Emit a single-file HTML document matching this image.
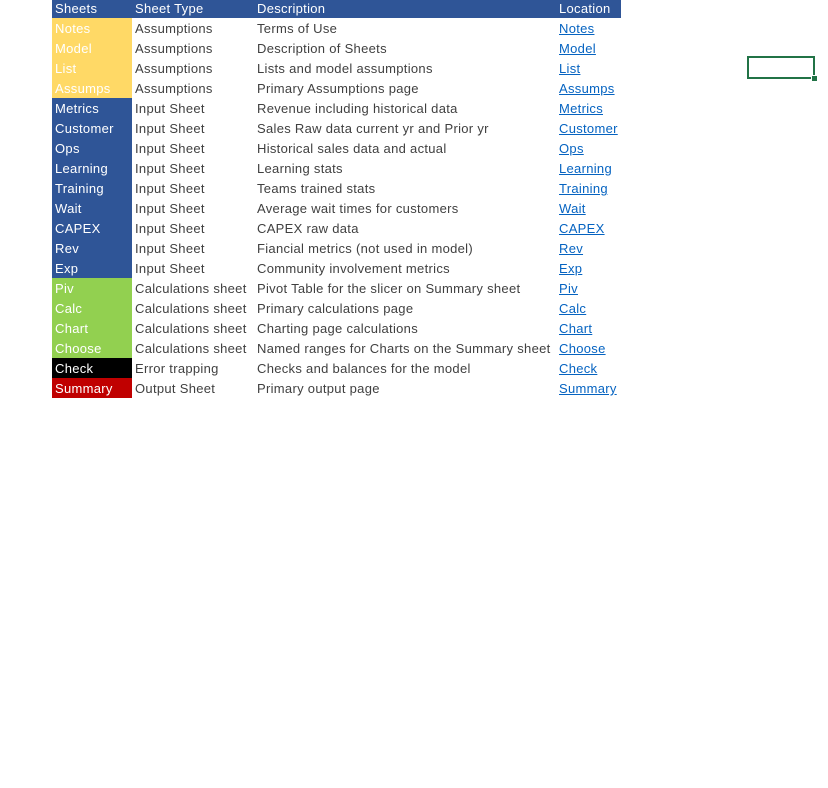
<!DOCTYPE html>
<html><head><meta charset="utf-8"><style>
body{margin:0;width:828px;height:788px;background:#fff;position:relative;font-family:"Liberation Sans",sans-serif;font-size:13px;letter-spacing:0.3px;overflow:hidden}
.r{position:absolute;left:52px;height:20px;width:569px}
.r div{position:absolute;top:0;height:20px;line-height:21px;padding-left:3px;box-sizing:border-box;white-space:nowrap;color:#404040}
.a{left:0;width:80px;color:#fff!important}
.b{left:80px;width:122px}
.c{left:202px;width:302px}
.d{left:504px;width:65px}
.d span{color:#0563c1;text-decoration:underline}
.h{top:0;height:18px;background:#2f5597}
.h div{height:18px;line-height:18px;color:#fff}
.y{background:#ffd966}.u{background:#2f5597}.g{background:#92d050}.k{background:#000}.re{background:#c00000}
.sel{position:absolute;left:747px;top:56px;width:64px;height:19px;border:2px solid #217346}
.sq{position:absolute;left:811px;top:75px;width:5px;height:5px;background:#217346;border:1px solid #fff}
</style></head><body>
<div class="r h"><div class="a">Sheets</div><div class="b" style="color:#fff">Sheet Type</div><div class="c" style="color:#fff">Description</div><div class="d" style="color:#fff">Location</div></div>
<div class="r" style="top:18px"><div class="a y">Notes</div><div class="b">Assumptions</div><div class="c">Terms of Use</div><div class="d"><span>Notes</span></div></div>
<div class="r" style="top:38px"><div class="a y">Model</div><div class="b">Assumptions</div><div class="c">Description of Sheets</div><div class="d"><span>Model</span></div></div>
<div class="r" style="top:58px"><div class="a y">List</div><div class="b">Assumptions</div><div class="c">Lists and model assumptions</div><div class="d"><span>List</span></div></div>
<div class="r" style="top:78px"><div class="a y">Assumps</div><div class="b">Assumptions</div><div class="c">Primary Assumptions page</div><div class="d"><span>Assumps</span></div></div>
<div class="r" style="top:98px"><div class="a u">Metrics</div><div class="b">Input Sheet</div><div class="c">Revenue including historical data</div><div class="d"><span>Metrics</span></div></div>
<div class="r" style="top:118px"><div class="a u">Customer</div><div class="b">Input Sheet</div><div class="c">Sales Raw data current yr and Prior yr</div><div class="d"><span>Customer</span></div></div>
<div class="r" style="top:138px"><div class="a u">Ops</div><div class="b">Input Sheet</div><div class="c">Historical sales data and actual</div><div class="d"><span>Ops</span></div></div>
<div class="r" style="top:158px"><div class="a u">Learning</div><div class="b">Input Sheet</div><div class="c">Learning stats</div><div class="d"><span>Learning</span></div></div>
<div class="r" style="top:178px"><div class="a u">Training</div><div class="b">Input Sheet</div><div class="c">Teams trained stats</div><div class="d"><span>Training</span></div></div>
<div class="r" style="top:198px"><div class="a u">Wait</div><div class="b">Input Sheet</div><div class="c">Average wait times for customers</div><div class="d"><span>Wait</span></div></div>
<div class="r" style="top:218px"><div class="a u">CAPEX</div><div class="b">Input Sheet</div><div class="c">CAPEX raw data</div><div class="d"><span>CAPEX</span></div></div>
<div class="r" style="top:238px"><div class="a u">Rev</div><div class="b">Input Sheet</div><div class="c">Fiancial metrics (not used in model)</div><div class="d"><span>Rev</span></div></div>
<div class="r" style="top:258px"><div class="a u">Exp</div><div class="b">Input Sheet</div><div class="c">Community involvement metrics</div><div class="d"><span>Exp</span></div></div>
<div class="r" style="top:278px"><div class="a g">Piv</div><div class="b">Calculations sheet</div><div class="c">Pivot Table for the slicer on Summary sheet</div><div class="d"><span>Piv</span></div></div>
<div class="r" style="top:298px"><div class="a g">Calc</div><div class="b">Calculations sheet</div><div class="c">Primary calculations page</div><div class="d"><span>Calc</span></div></div>
<div class="r" style="top:318px"><div class="a g">Chart</div><div class="b">Calculations sheet</div><div class="c">Charting page calculations</div><div class="d"><span>Chart</span></div></div>
<div class="r" style="top:338px"><div class="a g">Choose</div><div class="b">Calculations sheet</div><div class="c">Named ranges for Charts on the Summary sheet</div><div class="d"><span>Choose</span></div></div>
<div class="r" style="top:358px"><div class="a k">Check</div><div class="b">Error trapping</div><div class="c">Checks and balances for the model</div><div class="d"><span>Check</span></div></div>
<div class="r" style="top:378px"><div class="a re">Summary</div><div class="b">Output Sheet</div><div class="c">Primary output page</div><div class="d"><span>Summary</span></div></div>
<div class="sel"></div><div class="sq"></div>
</body></html>
